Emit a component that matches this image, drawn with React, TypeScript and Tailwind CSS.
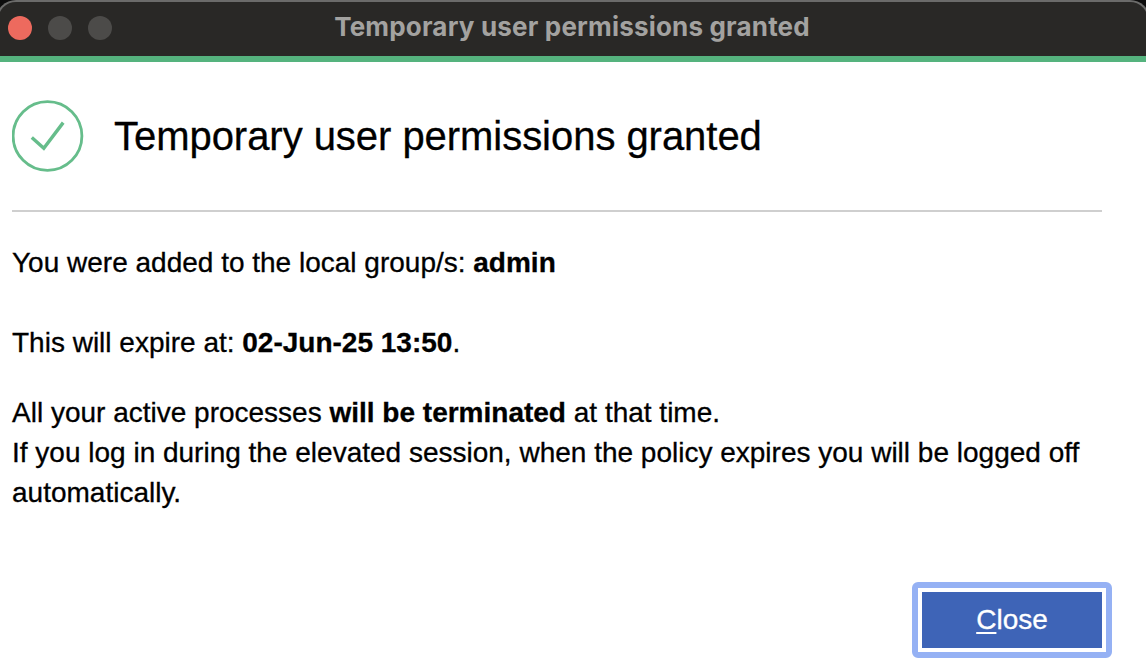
function TitleBar() {
  return (
    <header className="h-14 shrink-0 overflow-hidden bg-[#0c0c0c]">
      <div className="-mx-1 flex h-14 items-center rounded-t-[20px] border-2 border-b-0 border-[#6b6b6a] bg-[#292826] px-2.5">
        <div className="flex w-[104px] gap-4 pb-0.5">
          <span className="size-6 rounded-full bg-[#ed6a5e]" />
          <span className="size-6 rounded-full bg-[#4c4b49]" />
          <span className="size-6 rounded-full bg-[#4c4b49]" />
        </div>
        <h1 className="grow pr-[106px] pb-1 text-center font-['Inter',sans-serif] text-[26px] leading-8 font-bold tracking-[0.18px] whitespace-nowrap text-[#a3a2a0]">
          Temporary user permissions granted
        </h1>
      </div>
    </header>
  );
}

function CheckIcon() {
  return (
    <svg className="size-[72px] shrink-0" viewBox="0 0 72 72" fill="none" stroke="#66bd8b">
      <circle cx="35.5" cy="36" r="34.4" strokeWidth="2.8" />
      <path d="M19.8 37.5 L31.8 48.2 L51.2 22.6" strokeWidth="3.4" />
    </svg>
  );
}

export default function App() {
  return (
    <div className="flex h-[672px] w-[1146px] flex-col overflow-hidden bg-white font-['Liberation_Sans',Arial,sans-serif] text-black">
      <TitleBar />
      <div className="h-1.5 shrink-0 bg-[#55b37e]" />
      <main className="flex grow flex-col pl-3 [-webkit-text-stroke:0.3px]">
        <div className="mr-11 flex h-[150px] items-center gap-[30px] border-b-2 border-[#cfcfcf]">
          <CheckIcon />
          <h2 className="text-[40px] leading-[48px] tracking-[-0.04px] whitespace-nowrap">Temporary user permissions granted</h2>
        </div>
        <div className="mt-[31px] text-[28px] leading-10 whitespace-nowrap">
          <p>
            You were added to the local group/s: <b>admin</b>
          </p>
          <p className="mt-10">
            This will expire at: <b>02-Jun-25 13:50</b>.
          </p>
          <p className="mt-[30px]">
            All your active processes <b>will be terminated</b> at that time.
            <br />
            If you log in during the elevated session, when the policy expires you will be logged off
            <br />
            automatically.
          </p>
        </div>
        <button className="mt-[69px] mr-[34px] h-[76px] w-[200px] self-end rounded-md border-6 border-[#95b1f4] bg-white p-1">
          <span className="flex h-14 items-center justify-center bg-[#3e64b7] text-[28px] leading-8 text-white">
            <span className="underline decoration-2 underline-offset-[3px]">C</span>lose
          </span>
        </button>
      </main>
    </div>
  );
}
